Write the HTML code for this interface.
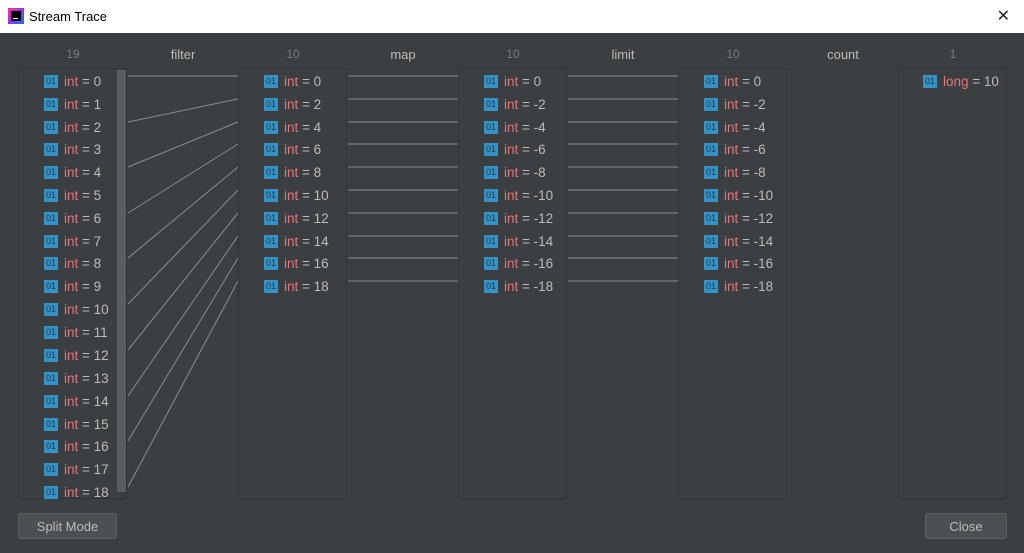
<!DOCTYPE html>
<html><head><style>
body{margin:0;width:1024px;height:553px;background:#3c3f41;font-family:"Liberation Sans",sans-serif;overflow:hidden;position:relative}
.tb{position:absolute;left:0;top:0;width:1024px;height:33px;background:#fff;color:#000;font-size:13px}
.tb .t{position:absolute;left:29px;top:9px}
.tb .x{position:absolute;right:14px;top:6px;font-size:16px;font-weight:300;color:#222}
.logo{position:absolute;left:8px;top:8px;width:16px;height:16px;background:linear-gradient(135deg,#fc318c,#7b3bf5 60%,#087cfa);}
.logo i{position:absolute;left:3px;top:3px;width:10px;height:10px;background:#000}
.logo i:after{content:"";position:absolute;left:2px;bottom:2px;width:5px;height:1px;background:#fff}
.p{position:absolute;top:68px;width:109px;height:431px;border:1px solid #313335;box-sizing:border-box}
.h{position:absolute;top:47px;font-size:13px;text-align:center;width:110px}
.n{color:#7a7d80;font-size:12px}.s{color:#bbbbbb}
.r{position:absolute;font-size:13.5px;color:#bbb;height:18px;line-height:18px;white-space:nowrap}
.r b{display:inline-block;width:14px;height:13px;background:#3592c4;color:#1e3a4a;font-size:9px;line-height:13px;text-align:center;vertical-align:-1px;margin-right:6px;font-weight:normal;position:relative;top:-3px}
.r em{font-style:normal;color:#e2777a}
.sb{position:absolute;left:117px;top:70px;width:9px;height:422px;background:#5b5e61}
.btn{position:absolute;top:513px;height:26px;border:1px solid #5e6060;border-radius:3px;background:#4c5052;color:#bbb;font-size:13px;line-height:26px;text-align:center;box-sizing:border-box}
</style></head><body>
<div class="tb"><div class="logo"><i></i></div><span class="t">Stream Trace</span><span class="x">✕</span></div>

<div class="h n" style="left:18px">19</div>
<div class="h s" style="left:128px">filter</div>
<div class="h n" style="left:238px">10</div>
<div class="h s" style="left:348px">map</div>
<div class="h n" style="left:458px">10</div>
<div class="h s" style="left:568px">limit</div>
<div class="h n" style="left:678px">10</div>
<div class="h s" style="left:788px">count</div>
<div class="h n" style="left:898px">1</div>

<div class="p" style="left:18px"></div>
<div class="p" style="left:238px"></div>
<div class="p" style="left:458px"></div>
<div class="p" style="left:678px"></div>
<div class="p" style="left:898px"></div>
<div class="sb"></div>

<svg width="1024" height="553" style="position:absolute;left:0;top:0" stroke="#8a8c8e" stroke-width="1">
<line x1="128" y1="76" x2="238" y2="76"/><line x1="128" y1="122" x2="238" y2="99"/><line x1="128" y1="167" x2="238" y2="122"/><line x1="128" y1="213" x2="238" y2="144"/><line x1="128" y1="258" x2="238" y2="167"/><line x1="128" y1="304" x2="238" y2="190"/><line x1="128" y1="350" x2="238" y2="213"/><line x1="128" y1="396" x2="238" y2="236"/><line x1="128" y1="441" x2="238" y2="258"/><line x1="128" y1="487" x2="238" y2="281"/>
<g>
<line x1="348" y1="76" x2="458" y2="76"/><line x1="348" y1="99" x2="458" y2="99"/><line x1="348" y1="122" x2="458" y2="122"/><line x1="348" y1="144" x2="458" y2="144"/><line x1="348" y1="167" x2="458" y2="167"/><line x1="348" y1="190" x2="458" y2="190"/><line x1="348" y1="213" x2="458" y2="213"/><line x1="348" y1="236" x2="458" y2="236"/><line x1="348" y1="258" x2="458" y2="258"/><line x1="348" y1="281" x2="458" y2="281"/>
<line x1="568" y1="76" x2="678" y2="76"/><line x1="568" y1="99" x2="678" y2="99"/><line x1="568" y1="122" x2="678" y2="122"/><line x1="568" y1="144" x2="678" y2="144"/><line x1="568" y1="167" x2="678" y2="167"/><line x1="568" y1="190" x2="678" y2="190"/><line x1="568" y1="213" x2="678" y2="213"/><line x1="568" y1="236" x2="678" y2="236"/><line x1="568" y1="258" x2="678" y2="258"/><line x1="568" y1="281" x2="678" y2="281"/>
</g></svg>

<div class="r" style="left:44px;top:73px"><b>01</b><em>int</em> = 0</div>
<div class="r" style="left:44px;top:96px"><b>01</b><em>int</em> = 1</div>
<div class="r" style="left:44px;top:119px"><b>01</b><em>int</em> = 2</div>
<div class="r" style="left:44px;top:141px"><b>01</b><em>int</em> = 3</div>
<div class="r" style="left:44px;top:164px"><b>01</b><em>int</em> = 4</div>
<div class="r" style="left:44px;top:187px"><b>01</b><em>int</em> = 5</div>
<div class="r" style="left:44px;top:210px"><b>01</b><em>int</em> = 6</div>
<div class="r" style="left:44px;top:233px"><b>01</b><em>int</em> = 7</div>
<div class="r" style="left:44px;top:255px"><b>01</b><em>int</em> = 8</div>
<div class="r" style="left:44px;top:278px"><b>01</b><em>int</em> = 9</div>
<div class="r" style="left:44px;top:301px"><b>01</b><em>int</em> = 10</div>
<div class="r" style="left:44px;top:324px"><b>01</b><em>int</em> = 11</div>
<div class="r" style="left:44px;top:347px"><b>01</b><em>int</em> = 12</div>
<div class="r" style="left:44px;top:370px"><b>01</b><em>int</em> = 13</div>
<div class="r" style="left:44px;top:393px"><b>01</b><em>int</em> = 14</div>
<div class="r" style="left:44px;top:416px"><b>01</b><em>int</em> = 15</div>
<div class="r" style="left:44px;top:438px"><b>01</b><em>int</em> = 16</div>
<div class="r" style="left:44px;top:461px"><b>01</b><em>int</em> = 17</div>
<div class="r" style="left:44px;top:484px"><b>01</b><em>int</em> = 18</div>

<div class="r" style="left:264px;top:73px"><b>01</b><em>int</em> = 0</div>
<div class="r" style="left:264px;top:96px"><b>01</b><em>int</em> = 2</div>
<div class="r" style="left:264px;top:119px"><b>01</b><em>int</em> = 4</div>
<div class="r" style="left:264px;top:141px"><b>01</b><em>int</em> = 6</div>
<div class="r" style="left:264px;top:164px"><b>01</b><em>int</em> = 8</div>
<div class="r" style="left:264px;top:187px"><b>01</b><em>int</em> = 10</div>
<div class="r" style="left:264px;top:210px"><b>01</b><em>int</em> = 12</div>
<div class="r" style="left:264px;top:233px"><b>01</b><em>int</em> = 14</div>
<div class="r" style="left:264px;top:255px"><b>01</b><em>int</em> = 16</div>
<div class="r" style="left:264px;top:278px"><b>01</b><em>int</em> = 18</div>

<div class="r" style="left:484px;top:73px"><b>01</b><em>int</em> = 0</div>
<div class="r" style="left:484px;top:96px"><b>01</b><em>int</em> = -2</div>
<div class="r" style="left:484px;top:119px"><b>01</b><em>int</em> = -4</div>
<div class="r" style="left:484px;top:141px"><b>01</b><em>int</em> = -6</div>
<div class="r" style="left:484px;top:164px"><b>01</b><em>int</em> = -8</div>
<div class="r" style="left:484px;top:187px"><b>01</b><em>int</em> = -10</div>
<div class="r" style="left:484px;top:210px"><b>01</b><em>int</em> = -12</div>
<div class="r" style="left:484px;top:233px"><b>01</b><em>int</em> = -14</div>
<div class="r" style="left:484px;top:255px"><b>01</b><em>int</em> = -16</div>
<div class="r" style="left:484px;top:278px"><b>01</b><em>int</em> = -18</div>

<div class="r" style="left:704px;top:73px"><b>01</b><em>int</em> = 0</div>
<div class="r" style="left:704px;top:96px"><b>01</b><em>int</em> = -2</div>
<div class="r" style="left:704px;top:119px"><b>01</b><em>int</em> = -4</div>
<div class="r" style="left:704px;top:141px"><b>01</b><em>int</em> = -6</div>
<div class="r" style="left:704px;top:164px"><b>01</b><em>int</em> = -8</div>
<div class="r" style="left:704px;top:187px"><b>01</b><em>int</em> = -10</div>
<div class="r" style="left:704px;top:210px"><b>01</b><em>int</em> = -12</div>
<div class="r" style="left:704px;top:233px"><b>01</b><em>int</em> = -14</div>
<div class="r" style="left:704px;top:255px"><b>01</b><em>int</em> = -16</div>
<div class="r" style="left:704px;top:278px"><b>01</b><em>int</em> = -18</div>

<div class="r" style="left:923px;top:73px"><b>01</b><em>long</em> = 10</div>

<div class="btn" style="left:18px;width:99px">Split Mode</div>
<div class="btn" style="left:925px;width:82px">Close</div>
</body></html>
